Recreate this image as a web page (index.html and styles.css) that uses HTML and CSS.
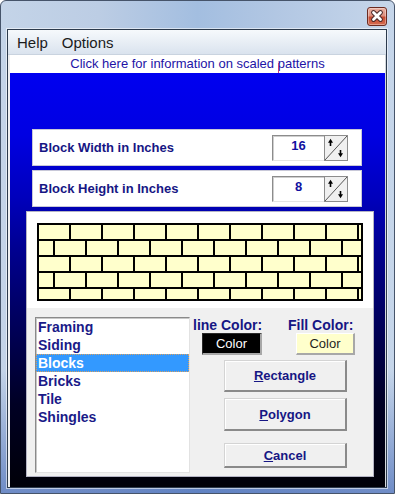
FILE: index.html
```html
<!DOCTYPE html>
<html>
<head>
<meta charset="utf-8">
<link rel="stylesheet" href="styles.css">
</head>
<body>
<div class="window">
  <div class="titlebar">
    <div class="close">
      <svg width="18" height="17" viewBox="0 0 18 17">
        <path d="M5.5 4.5 L12.5 11.5 M12.5 4.5 L5.5 11.5" stroke="#4b2a2a" stroke-width="4.8" stroke-linecap="round" fill="none"/>
        <path d="M5.5 4.5 L12.5 11.5 M12.5 4.5 L5.5 11.5" stroke="#ffffff" stroke-width="2.8" stroke-linecap="round" fill="none"/>
      </svg>
    </div>
  </div>
  <div class="client">
    <div class="menubar">
      <span class="menu-item">Help</span>
      <span class="menu-item">Options</span>
    </div>
    <div class="body">
      <div class="linkrow">
        <span class="link">Click here for information on scaled patterns</span>
        <span class="caret"></span>
      </div>
      <div class="blue">
        <div class="field">
          <span class="field-label">Block Width in Inches</span>
          <div class="spinner">
            <div class="spin-value">16</div>
            <div class="spin-btn">
              <svg width="24" height="26" viewBox="0 0 24 26">
                <rect x="0.5" y="0.5" width="23" height="25" fill="#f0f0f0" stroke="#8c8c8c"/>
                <line x1="1" y1="25" x2="23" y2="1" stroke="#555555" stroke-width="1"/>
                <path d="M6.5 11 V6.5" stroke="#000" stroke-width="1.6"/>
                <path d="M4 7.8 L6.5 3.8 L9 7.8 Z" fill="#000"/>
                <path d="M16.5 15 V19.5" stroke="#000" stroke-width="1.6"/>
                <path d="M14 18.2 L16.5 22.2 L19 18.2 Z" fill="#000"/>
              </svg>
            </div>
          </div>
        </div>
        <div class="field">
          <span class="field-label">Block Height in Inches</span>
          <div class="spinner">
            <div class="spin-value">8</div>
            <div class="spin-btn">
              <svg width="24" height="26" viewBox="0 0 24 26">
                <rect x="0.5" y="0.5" width="23" height="25" fill="#f0f0f0" stroke="#8c8c8c"/>
                <line x1="1" y1="25" x2="23" y2="1" stroke="#555555" stroke-width="1"/>
                <path d="M6.5 11 V6.5" stroke="#000" stroke-width="1.6"/>
                <path d="M4 7.8 L6.5 3.8 L9 7.8 Z" fill="#000"/>
                <path d="M16.5 15 V19.5" stroke="#000" stroke-width="1.6"/>
                <path d="M14 18.2 L16.5 22.2 L19 18.2 Z" fill="#000"/>
              </svg>
            </div>
          </div>
        </div>
        <div class="main">
          <div class="preview">
            <svg width="326" height="78" viewBox="0 0 326 78">
              <rect x="1" y="1" width="324" height="76" fill="#ffffcc" stroke="#000" stroke-width="2"/>
              <path d="M1 17H325M1 33H325M1 49H325M1 65H325" stroke="#000" stroke-width="2" fill="none"/>
              <path d="M33 1V17M65 1V17M97 1V17M129 1V17M161 1V17M193 1V17M225 1V17M257 1V17M289 1V17M321 1V17" stroke="#000" stroke-width="2" fill="none"/>
              <path d="M17 17V33M49 17V33M81 17V33M113 17V33M145 17V33M177 17V33M209 17V33M241 17V33M273 17V33M305 17V33" stroke="#000" stroke-width="2" fill="none"/>
              <path d="M33 33V49M65 33V49M97 33V49M129 33V49M161 33V49M193 33V49M225 33V49M257 33V49M289 33V49M321 33V49" stroke="#000" stroke-width="2" fill="none"/>
              <path d="M17 49V65M49 49V65M81 49V65M113 49V65M145 49V65M177 49V65M209 49V65M241 49V65M273 49V65M305 49V65" stroke="#000" stroke-width="2" fill="none"/>
              <path d="M33 65V77M65 65V77M97 65V77M129 65V77M161 65V77M193 65V77M225 65V77M257 65V77M289 65V77M321 65V77" stroke="#000" stroke-width="2" fill="none"/>
            </svg>
          </div>
          <div class="controls">
            <div class="listbox">
              <div class="item">Framing</div>
              <div class="item">Siding</div>
              <div class="item selected">Blocks</div>
              <div class="item">Bricks</div>
              <div class="item">Tile</div>
              <div class="item">Shingles</div>
            </div>
            <div class="right">
              <div class="color-row">
                <div class="color-col line-col">
                  <span class="color-label">line Color:</span>
                  <div class="swatch swatch-black">Color</div>
                </div>
                <div class="color-col fill-col">
                  <span class="color-label">Fill Color:</span>
                  <div class="swatch swatch-yellow">Color</div>
                </div>
              </div>
              <div class="cmd cmd-rect"><span><u>R</u>ectangle</span></div>
              <div class="cmd cmd-poly"><span><u>P</u>olygon</span></div>
              <div class="cmd cmd-cancel"><span><u>C</u>ancel</span></div>
            </div>
          </div>
        </div>
      </div>
    </div>
  </div>
</div>
</body>
</html>
```

FILE: styles.css
```css
* { box-sizing: border-box; }
html, body { margin: 0; padding: 0; }
body {
  width: 395px;
  height: 494px;
  overflow: hidden;
  font-family: "Liberation Sans", Arial, sans-serif;
  background: #ffffff;
}
.window {
  width: 395px;
  height: 494px;
  border: 1px solid #46546a;
  border-radius: 6px 6px 0 0;
  display: flex;
  flex-direction: column;
  background:
    linear-gradient(to bottom, rgba(40,80,170,0) 0%, rgba(40,80,170,0) 75%, rgba(40,80,170,0.55) 100%),
    linear-gradient(90deg, #c4d4e8 0%, #bccde4 25%, #a3bee0 50%, #b2c7e3 70%, #c6d6ea 100%);
}
.titlebar {
  height: 28px;
  flex: none;
  display: flex;
  justify-content: flex-end;
  align-items: flex-start;
  padding: 6px 7px 0 0;
}
.close {
  width: 20px;
  height: 19px;
  border: 1px solid #6b2b22;
  border-radius: 3px;
  background: linear-gradient(#eab0a2 0%, #dd8f7e 45%, #c64a31 55%, #d66c50 100%);
  box-shadow: inset 0 0 0 1px rgba(255,255,255,0.35);
  display: flex;
  align-items: center;
  justify-content: center;
}
.client {
  margin: 0 7px 0 6px;
  height: 459px;
  flex: none;
  border: 1px solid #2c3a4c;
  box-shadow: 0 0 0 1px rgba(255,255,255,0.55);
  display: flex;
  flex-direction: column;
  background: #f0f0f0;
}
.menubar {
  height: 25px;
  flex: none;
  border-bottom: 1px solid #c9d3df;
  background: linear-gradient(#f6f9fc, #dae3ee);
  display: flex;
  padding: 0 0 0 2px;
  font-size: 15px;
  line-height: 25px;
  color: #1b1b1b;
}
.menu-item { padding: 0 7px; }
.body {
  flex: 1;
  display: flex;
  flex-direction: column;
  border-left: 2px solid #f0f0f0;
  border-right: 1px solid #d4d8dc;
}
.linkrow {
  height: 18px;
  flex: none;
  background: #ffffff;
  text-align: center;
  font-size: 13px;
  line-height: 18px;
  color: #2213a6;
  position: relative;
}
.caret {
  position: absolute;
  left: 268px;
  top: 8px;
  width: 1px;
  height: 10px;
  background: #c8407a;
}
.blue {
  flex: 1;
  padding-top: 56px;
  display: flex;
  flex-direction: column;
  background: linear-gradient(to bottom, #0000f0 0%, #0000e2 15%, #0000bc 30%, #000092 42%, #000062 58%, #000024 80%, #000008 100%);
}
.field {
  margin-left: 22px;
  width: 330px;
  height: 37px;
  flex: none;
  background: #ffffff;
  border: 1px solid #c8c8d8;
  display: flex;
  align-items: center;
  padding: 0 13px 0 6px;
}
.field + .field { margin-top: 4px; }
.field-label {
  flex: 1;
  font-weight: bold;
  font-size: 13px;
  color: #161684;
}
.spinner { display: flex; margin-top: 1px; }
.spin-value {
  width: 52px;
  height: 26px;
  border-top: 1px solid #8c8c8c;
  border-left: 1px solid #8c8c8c;
  border-bottom: 1px solid #e4e4e4;
  box-shadow: inset 1px 1px 0 #cfcfcf;
  text-align: center;
  font-weight: bold;
  font-size: 13px;
  line-height: 20px;
  color: #1111a0;
}
.spin-btn { width: 24px; height: 26px; }
.spin-btn svg { display: block; }
.main {
  margin: 4px 0 0 16px;
  width: 348px;
  height: 266px;
  flex: none;
  border: 1px solid #b4b4c4;
  background: #f0f0f0;
  display: flex;
  flex-direction: column;
}
.preview {
  height: 96px;
  flex: none;
  background: #ffffff;
  padding: 11px 0 0 10px;
}
.preview svg { display: block; }
.controls {
  flex: 1;
  display: flex;
  padding: 9px 0 0 8px;
}
.listbox {
  width: 155px;
  height: 156px;
  background: #ffffff;
  border: 1px solid;
  border-color: #8a8a8a #e2e2e2 #e2e2e2 #8a8a8a;
  box-shadow: inset 1px 1px 0 #c8c8c8;
}
.item {
  height: 18px;
  line-height: 18px;
  padding-left: 2px;
  font-weight: bold;
  font-size: 14px;
  color: #1a1a88;
}
.item.selected {
  background: #3399ff;
  color: #ffffff;
  outline: 1px dotted #d8a060;
  outline-offset: -1px;
}
.right { display: flex; flex-direction: column; }
.color-row { display: flex; }
.color-col { display: flex; flex-direction: column; align-items: flex-start; }
.line-col { width: 98px; padding-left: 3px; }
.color-label {
  font-weight: bold;
  font-size: 14px;
  line-height: 16px;
  color: #161684;
}
.swatch {
  height: 22px;
  font-size: 13px;
  display: flex;
  align-items: center;
  justify-content: center;
  border-style: solid;
  border-width: 1px 2px 2px 1px;
}
.swatch-black {
  margin-left: 9px;
  width: 60px;
  background: #000000;
  color: #ffffff;
  border-color: #2a2a2a #a8a8a8 #a8a8a8 #2a2a2a;
}
.swatch-yellow {
  margin-left: 8px;
  width: 59px;
  background: #ffffcc;
  color: #1e1e1e;
  border-color: #ffffff #a8a8a8 #a8a8a8 #ffffff;
}
.cmd {
  margin-left: 34px;
  width: 123px;
  background: #f0f0f0;
  border-style: solid;
  border-width: 1px 2px 2px 1px;
  border-color: #d4d4d4 #8a8a8a #8a8a8a #d4d4d4;
  box-shadow: inset 1px 1px 0 #ffffff;
  font-weight: bold;
  font-size: 13px;
  color: #161684;
  display: flex;
  align-items: center;
  justify-content: center;
}
.cmd-rect { margin-top: 5px; height: 32px; }
.cmd-poly { margin-top: 6px; height: 33px; }
.cmd-cancel { margin-top: 12px; height: 25px; }
```
